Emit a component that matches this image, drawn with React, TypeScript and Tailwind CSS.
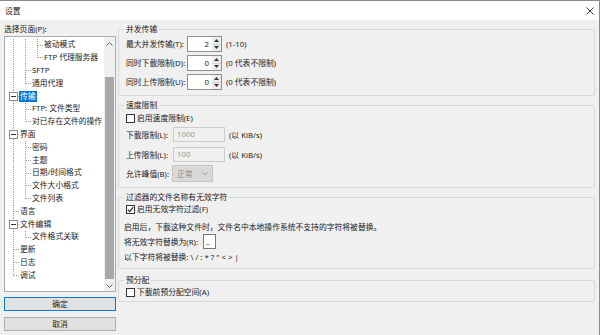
import React from 'react';

type G = 'pipe' | 'tee' | 'elbow' | 'box';

const FONT = "font-['Noto_Sans','Noto_Sans_CJK_SC',sans-serif]";

const treeRows: { guides: G[]; label: string; selected?: boolean }[] = [
  { guides: ['pipe', 'pipe', 'tee'], label: '被动模式' },
  { guides: ['pipe', 'pipe', 'elbow'], label: 'FTP 代理服务器' },
  { guides: ['pipe', 'tee'], label: 'SFTP' },
  { guides: ['pipe', 'elbow'], label: '通用代理' },
  { guides: ['box'], label: '传输', selected: true },
  { guides: ['pipe', 'tee'], label: 'FTP: 文件类型' },
  { guides: ['pipe', 'elbow'], label: '对已存在文件的操作' },
  { guides: ['box'], label: '界面' },
  { guides: ['pipe', 'tee'], label: '密码' },
  { guides: ['pipe', 'tee'], label: '主题' },
  { guides: ['pipe', 'tee'], label: '日期/时间格式' },
  { guides: ['pipe', 'tee'], label: '文件大小格式' },
  { guides: ['pipe', 'elbow'], label: '文件列表' },
  { guides: ['tee'], label: '语言' },
  { guides: ['box'], label: '文件编辑' },
  { guides: ['pipe', 'elbow'], label: '文件格式关联' },
  { guides: ['tee'], label: '更新' },
  { guides: ['tee'], label: '日志' },
  { guides: ['elbow'], label: '调试' },
];

const dot = { stroke: '#a0a0a0', strokeDasharray: '1 1' };

// dotted tree guide for one indent level
const Guide = ({ kind }: { kind: G }) => (
  <svg width="12" height="12.8" className="block shrink-0" shapeRendering="crispEdges">
    {(kind === 'pipe' || kind === 'tee') && <line x1="6.5" y1="0" x2="6.5" y2="12.8" {...dot} />}
    {kind === 'elbow' && <line x1="6.5" y1="0" x2="6.5" y2="6.5" {...dot} />}
    {(kind === 'tee' || kind === 'elbow') && <line x1="7" y1="6.5" x2="12" y2="6.5" {...dot} />}
    {kind === 'box' && (
      <>
        <line x1="6.5" y1="0" x2="6.5" y2="2" {...dot} />
        <line x1="6.5" y1="11" x2="6.5" y2="12.8" {...dot} />
        <line x1="11" y1="6.5" x2="12" y2="6.5" {...dot} />
        <rect x="2.5" y="2.5" width="8" height="8" fill="#fff" stroke="#8e8e8e" />
        <line x1="4" y1="6.5" x2="9" y2="6.5" stroke="#333" />
      </>
    )}
  </svg>
);

const Chevron = ({ up }: { up?: boolean }) => (
  <svg width="7" height="4" className="block">
    <polyline
      points={up ? '0.5,3.5 3.5,0.5 6.5,3.5' : '0.5,0.5 3.5,3.5 6.5,0.5'}
      fill="none"
      stroke="#606060"
      strokeWidth="1"
    />
  </svg>
);

const Check = ({ label, checked }: { label: string; checked?: boolean }) => (
  <div className="flex items-center h-[12px] ml-[2px]">
    <div className="w-[9px] h-[9px] border border-[#333] bg-white flex items-center justify-center">
      {checked && (
        <svg width="7" height="7" className="block">
          <polyline points="0.8,3.6 2.7,5.6 6.3,1.2" fill="none" stroke="#222" strokeWidth="1.1" />
        </svg>
      )}
    </div>
    <span className="ml-[2px] leading-[12px]">{label}</span>
  </div>
);

const SpinRow = ({ label, value, note }: { label: string; value: string; note: string }) => (
  <div className="flex items-center h-[16px]">
    <span className="w-[61px] leading-[12px]">{label}</span>
    <div className="w-[35px] h-[16px] border border-[#8f8f8f] bg-white flex">
      <span className="flex-1 text-right pr-[3px] leading-[14px]">{value}</span>
      <div className="w-[9px] flex flex-col">
        <div className="flex-1 bg-[#ececec] border-b border-[#d4d4d4] flex items-center justify-center">
          <svg width="5" height="3" className="block"><polygon points="0,3 2.5,0 5,3" fill="#333" /></svg>
        </div>
        <div className="flex-1 bg-[#ececec] flex items-center justify-center">
          <svg width="5" height="3" className="block"><polygon points="0,0 2.5,3 5,0" fill="#333" /></svg>
        </div>
      </div>
    </div>
    <span className="ml-[4px] leading-[12px]">{note}</span>
  </div>
);

const LimitRow = ({ label, value }: { label: string; value: string }) => (
  <div className="flex items-center h-[15px]">
    <span className="w-[47px] leading-[12px]">{label}</span>
    <div className="w-[52px] h-[15px] border border-[#cccccc] bg-[#f0f0f0] pl-[3px] leading-[13px] text-[#9a9a9a]">
      {value}
    </div>
    <span className="ml-[4px] leading-[12px]">(以 KiB/s)</span>
  </div>
);

const Group = ({ title, h, className, children }: { title: string; h: string; className?: string; children: React.ReactNode }) => (
  <fieldset className={`border border-[#d9d9d9] rounded-[2px] pl-[5px] pr-[5px] min-w-0 ${h} ${className ?? ''}`}>
    <legend className="px-[2px] leading-[11px]">{title}</legend>
    {children}
  </fieldset>
);

export default function App() {
  return (
    <div className={`w-[600px] h-[335px] bg-[#f0f0f0] border-t border-r border-[#8c8c8c] overflow-hidden text-[7.8px] text-[#1b1b1b] ${FONT}`}>
      {/* title bar */}
      <div className="h-[19px] bg-white flex items-center justify-between pl-[5px] pr-[5px]">
        <span className="leading-[10px]">设置</span>
        <svg width="8" height="8" className="block">
          <line x1="0.5" y1="0.5" x2="7.5" y2="7.5" stroke="#222" strokeWidth="0.9" />
          <line x1="7.5" y1="0.5" x2="0.5" y2="7.5" stroke="#222" strokeWidth="0.9" />
        </svg>
      </div>

      <div className="flex">
        {/* left: page tree */}
        <div className="w-[112px] ml-[4px] flex flex-col">
          <div className="mt-[4px] leading-[10px]">选择页面(P):</div>
          <div className="mt-[2px] h-[256px] border border-[#acacac] bg-white flex">
            <div className="flex-1 pt-[1.6px] pl-[2px] overflow-hidden">
              {treeRows.map((r) => (
                <div key={r.label} className="flex items-center h-[12.8px]">
                  {r.guides.map((g, i) => (
                    <Guide key={i} kind={g} />
                  ))}
                  <span
                    className={`px-[1px] leading-[11px] whitespace-nowrap ${r.selected ? 'bg-[#0078d7] text-white' : ''}`}
                  >
                    {r.label}
                  </span>
                </div>
              ))}
            </div>
            <div className="w-[11px] flex flex-col bg-[#f0f0f0]">
              <div className="h-[13px] flex items-center justify-center">
                <Chevron up />
              </div>
              <div className="flex-1">
                <div className="mt-[27px] h-[202px] mx-[1px] bg-[#a9a9a9]" />
              </div>
              <div className="h-[11px] flex items-center justify-center">
                <Chevron />
              </div>
            </div>
          </div>
          <button className="mt-[5px] h-[14px] border border-[#0078d7] bg-[#e1e1e1] leading-[12px]">确定</button>
          <button className="mt-[6px] h-[14px] border border-[#adadad] bg-[#e1e1e1] leading-[12px]">取消</button>
        </div>

        {/* right: transfer settings */}
        <div className="w-[477px] ml-[2px] flex flex-col">
          <Group title="并发传输" h="h-[72px]" className="mt-[4px]">
            <div className="flex flex-col gap-[3px] pt-[1px] ml-[2px]">
              <SpinRow label="最大并发传输(T):" value="2" note="(1-10)" />
              <SpinRow label="同时下載限制(D):" value="0" note="(0 代表不限制)" />
              <SpinRow label="同时上传限制(U):" value="0" note="(0 代表不限制)" />
            </div>
          </Group>

          <Group title="速度限制" h="h-[88px]" className="mt-[4px]">
            <div className="pt-[1px]">
              <Check label="启用速度限制(E)" />
              <div className="ml-[2px] mt-[3px]">
                <LimitRow label="下載限制(L):" value="1000" />
              </div>
              <div className="ml-[2px] mt-[5px]">
                <LimitRow label="上传限制(L):" value="100" />
              </div>
              <div className="ml-[2px] mt-[3px] flex items-center h-[17px]">
                <span className="w-[46px] leading-[12px]">允许峰值(B):</span>
                <div className="w-[41px] h-[17px] border border-[#c5c5c5] bg-[#d9d9d9] flex items-center justify-between pl-[4px] pr-[4px] text-[#8a8a8a]">
                  <span className="leading-[12px]">正常</span>
                  <svg width="6" height="4" className="block">
                    <polyline points="0.5,0.5 3,3 5.5,0.5" fill="none" stroke="#9a9a9a" strokeWidth="1" />
                  </svg>
                </div>
              </div>
            </div>
          </Group>

          <Group title="过滤器的文件名称有无效字符" h="h-[77px]" className="mt-[4px]">
            <Check label="启用无效字符过滤(F)" checked />
            <div className="mt-[6px] h-[12px] leading-[12px]">
              启用后，下載这种文件时，文件名中本地操作系统不支持的字符将被替换。
            </div>
            <div className="mt-[1px] flex items-center h-[15px]">
              <span className="w-[79px] leading-[12px]">将无效字符替换为(R):</span>
              <div className="w-[13px] h-[15px] border border-[#7a7a7a] bg-white pl-[2px] leading-[13px]">_</div>
            </div>
            <div className="mt-[2px] h-[12px] leading-[12px]">{'以下字符将被替换: \\ / : * ? " < > |'}</div>
          </Group>

          <Group title="预分配" h="h-[27px]" className="mt-[6px]">
            <Check label="下載前预分配空间(A)" />
          </Group>
        </div>
      </div>
    </div>
  );
}
